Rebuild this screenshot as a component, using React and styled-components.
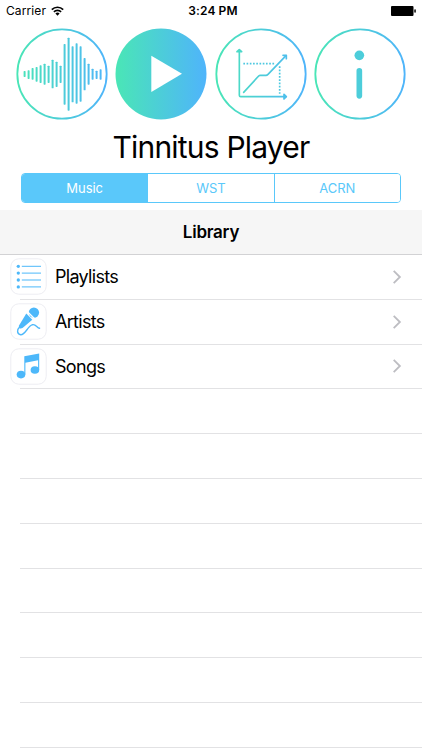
import React from 'react';
import styled, { createGlobalStyle } from 'styled-components';

const GlobalStyle = createGlobalStyle`
  * {
    box-sizing: border-box;
  }

  body {
    margin: 0;
    background: #fff;
    color: #000;
    font-family: Inter, 'Liberation Sans', sans-serif;
  }
`;

const Screen = styled.div`
  display: flex;
  flex-direction: column;
  width: 422px;
  height: 750px;
  overflow: hidden;
  background: #fff;
`;

const StatusBar = styled.div`
  display: grid;
  grid-template-columns: 1fr auto 1fr;
  align-items: center;
  height: 22px;
  padding: 0 6px;
  font-size: 12px;
  line-height: 22px;
`;

const Carrier = styled.div`
  display: flex;
  align-items: center;
  gap: 5px;
  letter-spacing: 0.1px;
`;

const Clock = styled.div`
  font-weight: 600;
  letter-spacing: 0.1px;
  padding-left: 4px;
`;

const BatteryIcon = styled.svg`
  display: block;
  justify-self: end;
`;

const Toolbar = styled.div`
  display: flex;
  gap: 7.2px;
  padding: 6.3px 0 0 16.2px;
  height: 102px;
`;

const RoundIcon = styled.svg`
  display: block;
  flex: none;
  width: 92px;
  height: 92px;
`;

const Title = styled.h1`
  margin: 0;
  height: 49px;
  font-size: 30px;
  font-weight: 400;
  line-height: 46px;
  letter-spacing: -0.8px;
  text-align: center;
`;

const Segments = styled.div`
  display: flex;
  flex: none;
  width: 380px;
  height: 30px;
  margin: 0 0 7px 21px;
  border: 1px solid #5ac8fa;
  border-radius: 4px;
  overflow: hidden;
`;

const Segment = styled.div`
  flex: 1;
  font-size: 13px;
  line-height: 28px;
  letter-spacing: -0.05px;
  text-align: center;
  color: ${(props) => (props.$active ? '#fff' : '#5ac8fa')};
  background: ${(props) => (props.$active ? '#5ac8fa' : '#fff')};

  & + & {
    border-left: 1px solid #5ac8fa;
  }
`;

const SectionHeader = styled.h2`
  flex: none;
  margin: 0;
  height: 45px;
  border-bottom: 1px solid #d2d2d4;
  background: #f6f6f6;
  font-size: 17px;
  font-weight: 600;
  line-height: 44px;
  letter-spacing: -0.25px;
  text-align: center;
`;

const List = styled.div`
  flex: none;
`;

const Row = styled.div`
  display: flex;
  align-items: center;
  height: 44.8px;
  padding: 0 20px 1px 10px;
  background: linear-gradient(#e2e2e4, #e2e2e4) 20px 100% / 100% 1px no-repeat;
`;

const Tile = styled.svg`
  display: block;
  flex: none;
  width: 37px;
  height: 37px;
`;

const RowLabel = styled.div`
  flex: 1;
  padding-left: 8px;
  font-size: 18px;
  letter-spacing: -0.7px;
`;

const blue = '#4db8fa';

const Gradient = ({ id }) => (
  <defs>
    <linearGradient id={id} gradientUnits="userSpaceOnUse" x1="2" y1="0" x2="274" y2="0">
      <stop offset="0" stopColor="#4ae6b6" />
      <stop offset="1" stopColor="#4fb4fb" />
    </linearGradient>
  </defs>
);

const Ring = ({ id }) => (
  <circle cx="138" cy="138" r="134" fill="none" stroke={`url(#${id})`} strokeWidth="5.500" />
);

// top and bottom of every bar in the wave
const bars = [
  [129, 147],
  [127, 153],
  [120, 155],
  [117, 161],
  [112, 165],
  [107, 170],
  [113, 165],
  [95, 181],
  [101, 177],
  [113, 165],
  [48, 230],
  [29, 248],
  [55, 223],
  [46, 227],
  [55, 221],
  [90, 187],
  [107, 170],
  [122, 155],
  [128, 153],
  [124, 155],
];

const WaveIcon = () => (
  <RoundIcon viewBox="0 0 276 276">
    <Gradient id="wave" />
    <Ring id="wave" />
    {bars.map(([top, bottom], i) => (
      <rect key={i} x={22.8 + i * 12} y={top} width="6" height={bottom - top} rx="2" fill="url(#wave)" />
    ))}
  </RoundIcon>
);

const PlayIcon = () => (
  <RoundIcon viewBox="0 0 276 276">
    <Gradient id="play" />
    <circle cx="138" cy="138" r="136.5" fill="url(#play)" />
    <path d="M109 83V192L201 137.500Z" fill="#fff" />
  </RoundIcon>
);

const ChartIcon = () => (
  <RoundIcon viewBox="0 0 276 276">
    <Gradient id="chart" />
    <Ring id="chart" />
    <g fill="none" stroke="url(#chart)" strokeWidth="5" strokeLinejoin="round" strokeLinecap="round">
      <path d="M73 66V202Q73 206 77 206H212" />
      <path d="M66 71L73 65L80 71Z" />
      <path d="M207 199L214 206L207 213Z" />
      <path d="M86 193L131 144Q133 142 136 142H153Q156 142 159 139L213 83" />
      <path d="M204 82H214V92" />
    </g>
    <g fill="none" stroke="#4dc8e0" strokeWidth="5" strokeDasharray="5 4.700">
      <path d="M85 107H179" />
      <path d="M194 115V198" />
    </g>
  </RoundIcon>
);

const InfoIcon = () => (
  <RoundIcon viewBox="0 0 276 276">
    <Gradient id="info" />
    <Ring id="info" />
    <circle cx="136" cy="82" r="14.500" fill="#4dcdda" />
    <rect x="127.500" y="120" width="17" height="92" rx="8.500" fill="#4dcdda" />
  </RoundIcon>
);

const WifiIcon = () => (
  <svg width="13" height="10" viewBox="0 0 13 10" fill="none" stroke="#000" strokeWidth="1.700">
    <path d="M0.800 3.600A8.100 8.100 0 0 1 12.200 3.600" />
    <path d="M2.900 5.800A5.100 5.100 0 0 1 10.100 5.800" />
    <path d="M6.500 9.700L4.400 7.500A3 3 0 0 1 8.600 7.500Z" fill="#000" stroke="none" />
  </svg>
);

const Frame = () => (
  <rect x="0.800" y="0.800" width="35.400" height="35.400" rx="8" fill="#fff" stroke="#ededf2" strokeWidth="1" />
);

const PlaylistsIcon = () => (
  <Tile viewBox="0 0 37 37">
    <Frame />
    {[8.3, 15.1, 22, 28.9].map((y) => (
      <g key={y} fill={blue}>
        <circle cx="8.300" cy={y} r="1.650" />
        <rect x="11.800" y={y - 0.5} width="19.200" height="1" />
      </g>
    ))}
  </Tile>
);

const ArtistsIcon = () => (
  <Tile viewBox="0 0 37 37">
    <Frame />
    <g fill={blue}>
      <circle cx="23.900" cy="9.600" r="5.200" />
      <path d="M16.300 10.400L22.300 16.700L12.500 25Q10.600 26 9.300 24.900Q8.400 23.800 9.200 22.300Z" />
    </g>
    <path d="M17.300 8.500L24.800 16" stroke="#fff" strokeWidth="1.200" />
    <path
      d="M9.600 24C6.600 26.700 6.900 31.200 10.700 31.700C15.300 32 17.500 23.300 22.500 21.700C26 20.900 26.800 24.800 29.600 25.200"
      fill="none"
      stroke={blue}
      strokeWidth="1.400"
      strokeLinecap="round"
    />
  </Tile>
);

const SongsIcon = () => (
  <Tile viewBox="0 0 37 37">
    <Frame />
    <g fill={blue}>
      <ellipse cx="11" cy="26.600" rx="4.300" ry="3.800" />
      <ellipse cx="24.900" cy="22" rx="4.300" ry="3.800" />
      <path d="M14.300 8.300L29.200 5.600V22H28.100V12.300L15.400 14.700V26.600H14.300Z" />
    </g>
  </Tile>
);

const Chevron = () => (
  <svg width="10" height="14" viewBox="0 0 10 14" fill="none" stroke="#bdbdc2" strokeWidth="1.800">
    <path d="M1.700 0.900L7.900 7L1.700 13.100" />
  </svg>
);

const items = [
  { label: 'Playlists', Icon: PlaylistsIcon },
  { label: 'Artists', Icon: ArtistsIcon },
  { label: 'Songs', Icon: SongsIcon },
];

const emptyRows = 8;

const App = () => (
  <>
    <GlobalStyle />
    <Screen>
      <StatusBar>
        <Carrier>
          Carrier
          <WifiIcon />
        </Carrier>
        <Clock>3:24 PM</Clock>
        <BatteryIcon width="25" height="10" viewBox="0 0 25 10">
          <rect x="0" y="0" width="22.500" height="10" rx="1" />
          <rect x="23.300" y="3.300" width="1.500" height="3.400" rx="0.700" />
        </BatteryIcon>
      </StatusBar>
      <Toolbar>
        <WaveIcon />
        <PlayIcon />
        <ChartIcon />
        <InfoIcon />
      </Toolbar>
      <Title>Tinnitus Player</Title>
      <Segments>
        <Segment $active>Music</Segment>
        <Segment>WST</Segment>
        <Segment>ACRN</Segment>
      </Segments>
      <SectionHeader>Library</SectionHeader>
      <List>
        {items.map(({ label, Icon }) => (
          <Row key={label}>
            <Icon />
            <RowLabel>{label}</RowLabel>
            <Chevron />
          </Row>
        ))}
        {Array.from({ length: emptyRows }, (_, i) => (
          <Row key={i} />
        ))}
      </List>
    </Screen>
  </>
);

export default App;
